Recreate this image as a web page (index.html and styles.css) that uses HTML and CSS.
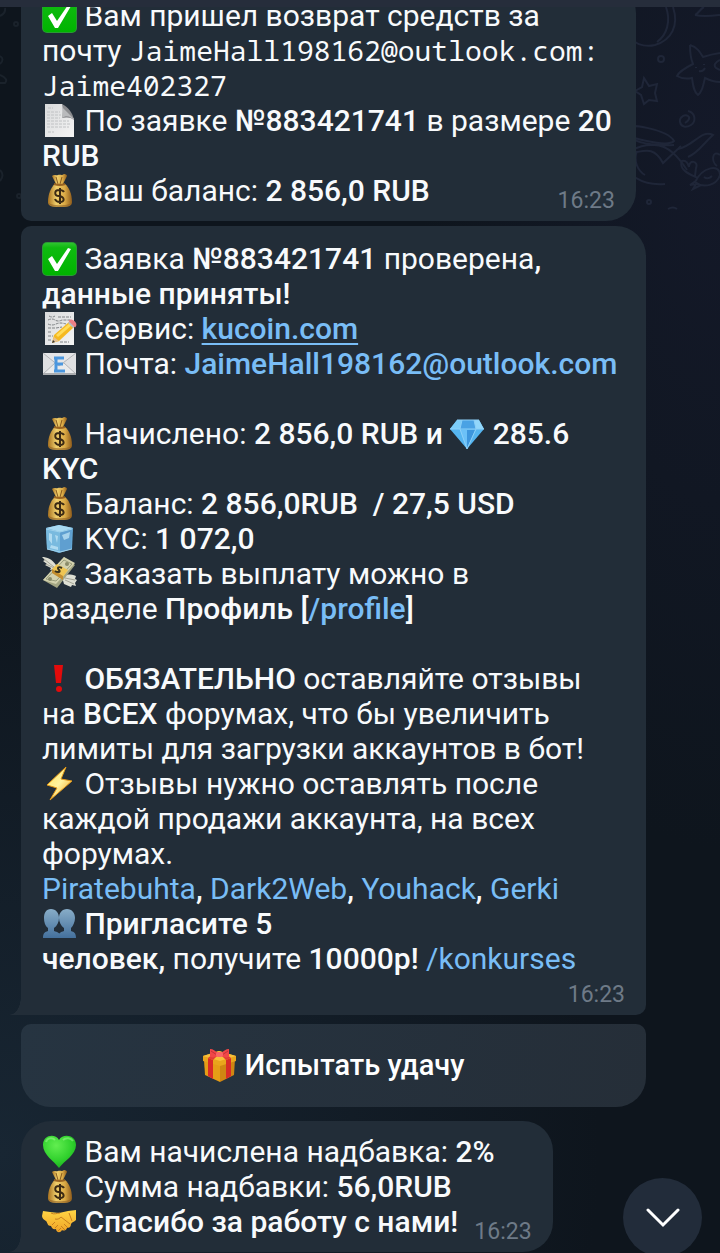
FILE: index.html
```
<!DOCTYPE html>
<html lang="ru">
<head>
    <meta charset="utf-8">
    <meta name="viewport" content="width=device-width, initial-scale=1">
    <title>Чат</title>
    <link rel="stylesheet" href="styles.css">
</head>
<body>

    <!-- emoji set -->
    <svg class="sprites" aria-hidden="true">
        <defs>
            <linearGradient id="gGreen" x1="0" y1="0" x2="0" y2="1">
                <stop offset="0" stop-color="#2fc42f"/><stop offset=".15" stop-color="#0fba10"/><stop offset="1" stop-color="#00b400"/>
            </linearGradient>
            <linearGradient id="gGold" x1="0" y1="0" x2="1" y2="0">
                <stop offset="0" stop-color="#a87220"/><stop offset=".35" stop-color="#f0cf6c"/><stop offset=".7" stop-color="#dbaa45"/><stop offset="1" stop-color="#8f5c1c"/>
            </linearGradient>
            <linearGradient id="gPaper" x1="0" y1="0" x2="1" y2="1">
                <stop offset="0" stop-color="#d9dadb"/><stop offset="1" stop-color="#f4f4f4"/>
            </linearGradient>
            <linearGradient id="gPeople" x1="0" y1="0" x2="0" y2="1">
                <stop offset="0" stop-color="#88adc8"/><stop offset="1" stop-color="#44709c"/>
            </linearGradient>
            <linearGradient id="gBolt" x1="0" y1="0" x2="1" y2="1">
                <stop offset="0" stop-color="#ffe45c"/><stop offset=".5" stop-color="#fff3a0"/><stop offset="1" stop-color="#f09a10"/>
            </linearGradient>
            <linearGradient id="gHand" x1="0" y1="0" x2="0" y2="1">
                <stop offset="0" stop-color="#ffd545"/><stop offset="1" stop-color="#f0a325"/>
            </linearGradient>
            <radialGradient id="gHeart" cx=".4" cy=".3" r=".8">
                <stop offset="0" stop-color="#62ee50"/><stop offset=".6" stop-color="#2fd02c"/><stop offset="1" stop-color="#15a51d"/>
            </radialGradient>
        </defs>

        <symbol id="check" viewBox="0 0 35 35">
            <rect x="0" y="1" width="35" height="34" rx="5" fill="#2b9a35"/>
            <rect x="1" y="2" width="33" height="32" rx="4" fill="url(#gGreen)"/>
            <path d="M6 18l4-3 5 8L26 7l3 1-13 22h-3z" fill="#fff"/>
        </symbol>

        <symbol id="page" viewBox="0 0 35 35">
            <path d="M3 1h17l12 15v18H3z" fill="url(#gPaper)"/>
            <path d="M20 1c1 5 1 10 0 14 4-1 9-1 12 2C31 10 26 4 20 1z" fill="#8b8c8f"/>
            <path d="M20 15c4-3 8-2 12 2V16L21 5z" fill="#b9babc"/>
            <path d="M6 5h5M5 9h13M5 12h14M5 15h13M5 18h22M5 21h24M5 24h22M6 29h6" stroke="#c0c2c4" stroke-width="1" stroke-dasharray="3 1"/>
        </symbol>

        <symbol id="bag" viewBox="0 0 35 35">
            <path d="M10 3c2-2 4 0 6-1s4 1 6-1c2 0 3 1 3 2l-4 8h-7z" fill="url(#gGold)"/>
            <path d="M14 4l2 7M20 4l-2 7" stroke="#8a5c1f" stroke-width="1"/>
            <path d="M13 11h10c4 3 7 10 7 18 0 4-3 5-12 5S6 33 6 29c0-8 3-15 7-18z" fill="url(#gGold)"/>
            <path d="M7 30c3 3 19 3 22 0 0 3-3 4-11 4S7 33 7 30z" fill="#8f6124" opacity=".6"/>
            <path d="M12 11q6 2 11 0" stroke="#9a6422" stroke-width="2" fill="none"/>
            <path d="M22 19c-1-2-3-2-5-2-5 0-5 6 0 6 6 1 6 6 1 6-2 0-4 0-5-3M18 15v16" stroke="#3b2a14" stroke-width="2" fill="none"/>
        </symbol>

        <symbol id="memo" viewBox="0 0 35 35">
            <path d="M3 1h29v33H3z" fill="url(#gPaper)"/>
            <path d="M7 5q3 2 6 0M16 6h13M6 9q4-2 7 0t7 0h9M6 13q4 2 8 0t10 0M6 17h8l6-1M6 21h4M6 25h5M6 29h4M18 31h9" stroke="#808386" stroke-width="1" fill="none" stroke-dasharray="3 1"/>
            <path d="M12 24L27 11l5 5-15 14-7 2z" fill="#f5b921"/>
            <path d="M14 24L28 12l2 2-14 12z" fill="#ffdc5a"/>
            <path d="M12 26l5 4-7 2z" fill="#e6c190"/><path d="M10 32l1-3 2 2z" fill="#333"/>
            <path d="M26 12l2-2 5 5-2 2z" fill="#b6bcc2"/>
            <path d="M28 10c2-2 7 3 5 5z" fill="#ec7f85" stroke="#ec7f85" stroke-width="2"/>
        </symbol>

        <symbol id="email" viewBox="0 0 35 35">
            <path d="M1 7h33v22H1z" fill="#dfe0e2"/>
            <path d="M1 28l12-11h9l12 11" fill="#e9eaeb" stroke="#b3b5b8"/>
            <path d="M1 7l16 13L34 7" fill="#e4e5e7" stroke="#b3b5b8"/>
            <path d="M1 28h33" stroke="#aaacaf" stroke-width="2"/>
            <path d="M22 12h-8v13h9M14 18h7M12 12h3M12 25h3" stroke="#4c97de" stroke-width="3" fill="none"/>
        </symbol>

        <symbol id="gem" viewBox="0 0 35 35">
            <path d="M7 4l22 0 5 9-17 20L0 13z" fill="#55b5f0"/>
            <path d="M7 4h5l-2 9H0z" fill="#7ccdf9"/><path d="M12 4h12l2 9H10z" fill="#4aa2e4"/><path d="M24 4h5l5 9h-8z" fill="#92d7fb"/>
            <path d="M10 14l7 19 8-19z" fill="#6cc1f7"/><path d="M17 14v19l8-19z" fill="#3d96dd"/>
            <path d="M7 4h22M0 13h34M12 4l-2 9 7 20 9-20-2-9" stroke="#8dd0f8" stroke-width="1" fill="none"/>
        </symbol>

        <symbol id="ice" viewBox="0 0 35 35">
            <path d="M4 7l13-3 14 3-1 21-13 4-12-4z" fill="#63a9d8"/>
            <path d="M4 7l13-3 14 3-13 4z" fill="#a9daf2"/>
            <path d="M4 8l14 3v20L5 28z" fill="#79badf"/>
            <path d="M18 11l12-3-1 20-11 3z" fill="#5f9fd0"/>
            <path d="M7 12l3 1v10l-3-4zM20 14l8-3-1 6-5 2zM9 24l7 2v3l-8-2zM13 14l3 1-1 7z" fill="#c7e9f8" opacity=".7"/>
            <path d="M4 8l14 3 12-3M5 28l13 3 12-3" stroke="#a0d2ec" fill="none"/>
        </symbol>

        <symbol id="cash" viewBox="0 0 35 35">
            <path d="M14 9C10 3 5 1 0 1l3 3-2 1 4 3-2 1 6 3-1 2 6-1z" fill="#dfdfd3"/>
            <path d="M20 21c3-3 8-3 14-1l-1 3 2 1-2 3 1 3-4-1-1 2-7-3z" fill="#dedfd3"/>
            <path d="M2 3l10 8M4 8l8 4M23 22l10 2M23 24l9 4" stroke="#a5a596" fill="none"/>
            <path d="M1 24L22 1l11 8-18 23z" fill="#a3a583"/>
            <path d="M1 24L22 1l11 6-19 21z" fill="#d3d2af"/>
            <path d="M4 23L22 4l8 4-16 17z" fill="none" stroke="#9a9d7c"/>
            <path d="M10 13l5-5 11 6-5 7z" fill="#eec553"/><path d="M10 13l11 7v4l-11-7z" fill="#c28d2f"/>
            <path d="M20 12c-4-2-5 0-3 2s-1 3-4 1" fill="none" stroke="#37321f" stroke-width="2"/>
            <circle cx="25" cy="8" r="2" fill="#898b68"/><circle cx="8" cy="23" r="2" fill="#898b68"/>
        </symbol>

        <symbol id="excl" viewBox="0 0 35 35">
            <path d="M12 4h9l-2 18h-5z" fill="#e30b0b"/><circle cx="17" cy="28" r="3" fill="#e30b0b"/>
        </symbol>

        <symbol id="bolt" viewBox="0 0 35 35">
            <path d="M24 1L5 19l10 3-7 12 22-19-11-2z" fill="url(#gBolt)" stroke="#e69a18" stroke-width="1"/>
        </symbol>

        <symbol id="people" viewBox="0 0 35 35">
            <path d="M25 3c5 0 8 4 8 9 0 4-2 8-4 10v3c3 1 5 2 5 7H16c0-5 3-6 6-7v-3c-3-2-5-6-5-10 0-5 3-9 8-9z" fill="url(#gPeople)"/>
            <path d="M9 3c5 0 8 4 8 9 0 4-2 8-5 10v3c3 1 7 2 7 7H1c0-5 2-6 5-7v-3c-3-2-4-6-4-10 0-5 2-9 7-9z" fill="url(#gPeople)"/>
        </symbol>

        <symbol id="gift" viewBox="0 0 35 35">
            <path d="M2 12l16 5v17L3 27z" fill="#e69d16"/><path d="M18 16l15-5-1 16-14 7z" fill="#cf8612"/>
            <path d="M1 8l16-5 17 5v5l-16 5L1 13z" fill="#e9a51c"/>
            <path d="M1 8l16-5 17 5-16 5z" fill="#f8bf3a"/>
            <path d="M6 10l5 2v19l-5-3zM24 12l5-2v18l-5 3z" fill="#d92b27"/>
            <path d="M6 10l5-4 4 2-4 4zM29 10l-5-4-4 2 4 4z" fill="#e23b35"/>
            <path d="M17 6c-3-3-6-5-9-5v8c4 1 6 0 9-2zM18 6c3-3 6-5 9-5v8c-4 1-6 0-9-2z" fill="#f04747"/>
            <path d="M9 3l6 4M26 3l-6 4" stroke="#c4303a"/>
            <rect x="14" y="4" width="7" height="5" rx="2" fill="#fa6565"/>
        </symbol>

        <symbol id="heart" viewBox="0 0 35 35">
            <path d="M17 34C12 27 1 21 1 11 1 1 13-1 17 6c4-7 17-5 17 5 0 10-12 16-17 23z" fill="url(#gHeart)"/>
            <path d="M4 8c1-4 6-5 9-2M21 6c3-3 8-2 10 1" stroke="#a3f796" stroke-width="2" fill="none" opacity=".5"/>
        </symbol>

        <symbol id="shake" viewBox="0 0 35 35">
            <path d="M1 7l7 1 9 1 9-2 8-1v10c-2 2-4 2-5 4 0 3-2 4-4 4-1 3-4 3-5 2-2 4-6 2-6-1-3 1-4-1-5-3-4 0-3-3-5-5-2-1-4-3-4-5z" fill="url(#gHand)"/>
            <path d="M9 9c3 2 6 0 9 0M13 15c3 1 5-1 6-2l9 7M10 21l3-3M13 24l3-3M16 27l3-3M22 20l4 4M19 22l4 4M27 9l3 8" stroke="#c8801f" stroke-width="1" fill="none"/>
        </symbol>
    </svg>

    <header class="topbar"></header>

    <!-- wallpaper doodles -->
    <svg class="doodles doodles-right" viewBox="0 0 100 220" aria-hidden="true">
        <path d="M53 7c6 18-1 33-18 38-8 2-16 0-20-3M46 7c5 14 1 28-9 35"/>
        <path d="M75 15c4-2 5-6 9-8M75 15c8 2 16 1 25 0"/>
        <circle cx="41" cy="59" r="3"/>
        <path d="M70 45c7 2 10 7 13 12 6-2 10-3 17-4M70 45c0 7 0 12 3 19-8 4-14 8-16 12 5 3 10 3 15 2 1 8 2 14 6 17 5-4 5-10 7-17 6 3 10 4 15 4"/>
        <path d="M76 67v1M84 64v1M79 71q4 1 6-3M100 60q-8 4-4 8l4 2"/>
        <path d="M24 78l5 8 8-2-2 9 2 8-8-1-5 4-3-9-6-4 7-4zM65 123c3-2 6-5 3-7s-9 1-8 6 6 6 11 3 5-12-3-14"/>
        <path d="M0 128c9-6 48 2 54 13-6 6-34-1-54-7M0 132c16 12 34 14 54 13M0 165c4-13 19-21 34-20 15 0 25 13 33 25M0 160c9 17 23 26 45 24M17 151c-4 10 1 20 8 24M17 152c10-2 18-4 26 11l18-17"/>
        <path d="M58 149c16-3 23-20 35-14-10 9-15 18-25 22M78 178c-7-3-20-8-16-17 5-1 6 3 7 6 0-8 10-6 7 1l-1 8M75 182c8-16 25-18 25-7-3 10-16 14-25 7zM77 180l-7 5 6-1-3 5 8-4M84 177q4 3 8-1M100 155c-8-6-9 7-3 11"/>
        <circle cx="29" cy="202" r="2"/><path d="M48 209q5-3 9 0"/>
    </svg>
    <svg class="doodles doodles-left" viewBox="0 0 21 220" aria-hidden="true">
        <path d="M5 8q1 5-5 8M0 56q5 3 0 8M0 75q9 4 5 8H0M0 170q5 5 0 11"/><circle cx="16" cy="24" r="2"/><circle cx="19" cy="196" r="2"/>
    </svg>

    <main class="chat">
        <article class="bubble bubble-first">
            <svg class="emoji"><use href="#check"/></svg> Вам пришел возврат средств за<br>
            почту <code>JaimeHall198162@outlook.com:<br>Jaime402327</code><br>
            <svg class="emoji"><use href="#page"/></svg> По заявке <b>№883421741</b> в размере <b>20<br>RUB</b><br>
            <svg class="emoji"><use href="#bag"/></svg> Ваш баланс: <b>2 856,0 RUB</b>
            <time>16:23</time>
        </article>

        <article class="bubble bubble-main tail">
            <svg class="emoji"><use href="#check"/></svg> Заявка <b>№883421741</b> проверена<b>,<br>
            данные приняты!</b><br>
            <svg class="emoji"><use href="#memo"/></svg> Сервис: <a class="site" href="#kucoin">kucoin.com</a><br>
            <svg class="emoji"><use href="#email"/></svg> Почта: <b><a href="#mail">JaimeHall198162@outlook.com</a></b><br>
            <br>
            <svg class="emoji"><use href="#bag"/></svg> Начислено: <b>2 856,0 RUB и <svg class="emoji"><use href="#gem"/></svg> 285.6<br>KYC</b><br>
            <svg class="emoji"><use href="#bag"/></svg> Баланс: <b>2 856,0RUB&nbsp; / 27,5 USD</b><br>
            <svg class="emoji"><use href="#ice"/></svg> KYC: <b>1 072,0</b><br>
            <svg class="emoji"><use href="#cash"/></svg> Заказать выплату можно в<br>
            разделе <b>Профиль [<a href="#profile">/profile</a>]</b><br>
            <br>
            <svg class="emoji"><use href="#excl"/></svg> <b>ОБЯЗАТЕЛЬНО</b> оставляйте отзывы<br>
            на <b>ВСЕХ</b> форумах, что бы увеличить<br>
            лимиты для загрузки аккаунтов в бот!<br>
            <svg class="emoji"><use href="#bolt"/></svg> Отзывы нужно оставлять после<br>
            каждой продажи аккаунта, на всех<br>
            форумах.<br>
            <a href="#piratebuhta">Piratebuhta</a><b>,</b> <a href="#dark2web">Dark2Web</a><b>,</b> <a href="#youhack">Youhack</a><b>,</b> <a href="#gerki">Gerki</a><br>
            <svg class="emoji"><use href="#people"/></svg> <b>Пригласите 5<br>
            человек,</b> получите <b>10000р!</b> <a href="#konkurses">/konkurses</a>
            <time>16:23</time>
        </article>

        <button class="luck" type="button"><svg class="emoji"><use href="#gift"/></svg> Испытать удачу</button>

        <article class="bubble bubble-last tail">
            <svg class="emoji"><use href="#heart"/></svg> Вам начислена надбавка: <b>2%</b><br>
            <svg class="emoji"><use href="#bag"/></svg> Сумма надбавки: <b>56,0RUB</b><br>
            <svg class="emoji"><use href="#shake"/></svg> <b>Спасибо за работу с нами!</b>
            <time>16:23</time>
        </article>
    </main>

    <button class="scroll-down" type="button" aria-label="Вниз">
        <svg viewBox="0 0 34 20"><path d="M2 2l15 15L32 2"/></svg>
    </button>

</body>
</html>
```
FILE: styles.css
```
* {
    box-sizing: border-box;
}
body {
    margin: 0;
    min-height: 100vh;
    overflow: hidden;
    position: relative;
    background:
        radial-gradient(ellipse 600px 600px at 0% 92%, #182633, transparent),
        radial-gradient(ellipse 300px 700px at 100% 12%, #141929, transparent),
        #0e151d;
    color: #f8fafc;
    font-family: Roboto, "Noto Sans", sans-serif;
    font-size: 30px;
    line-height: 35px;
}
b {
    font-weight: 500;
}
a {
    color: #79bdf6;
    text-decoration: none;
}
code {
    font-family: "Noto Sans Mono", "DejaVu Sans Mono", monospace;
    font-size: 28px;
    line-height: 1;
}
time {
    position: absolute;
    right: 21px;
    bottom: 7px;
    color: #6e7a87;
    font-size: 23px;
    line-height: 26px;
}
.sprites {
    position: absolute;
    width: 0;
    height: 0;
}
.topbar {
    position: fixed;
    top: 0;
    left: 0;
    right: 0;
    height: 7px;
    background: #262d3b;
    z-index: 2;
}
.doodles {
    position: absolute;
    top: 0;
    height: 220px;
    fill: none;
    stroke: #1f2638;
    stroke-width: 2;
}
.doodles-right {
    right: 0;
    width: 100px;
}
.doodles-left {
    left: 0;
    width: 21px;
    stroke: #1a222b;
}

/* the list is scrolled a little under the top bar */
.chat {
    position: relative;
    display: flex;
    flex-direction: column;
    align-items: flex-start;
    max-width: 646px;
    margin-top: -17px;
    padding-left: 21px;
}
.bubble {
    position: relative;
    padding: 15px 21px 13px;
    background: #222d38;
    white-space: nowrap;
}
.bubble-first {
    padding-right: 24px;
    margin-bottom: 5px;
    border-radius: 10px 30px 30px 10px;
}
.bubble-main {
    align-self: stretch;
    padding-bottom: 39px;
    border-radius: 10px 30px 10px 0;
}
.bubble-last {
    padding-top: 13px;
    padding-right: 58px;
    border-radius: 30px 30px 30px 0;
}
.tail::before {
    content: "";
    position: absolute;
    left: -11px;
    bottom: 0;
    width: 11px;
    height: 18px;
    background: radial-gradient(ellipse 11px 18px at 0 0, transparent 96%, #222d38 100%);
}
.emoji {
    width: 35px;
    height: 35px;
    vertical-align: top;
}
.site {
    font-weight: 500;
    text-decoration: underline;
    text-decoration-thickness: 2px;
    text-underline-offset: 4px;
}
.luck {
    align-self: stretch;
    margin: 9px 0 14px;
    padding: 24px;
    border: none;
    border-radius: 10px 10px 30px 30px;
    background: linear-gradient(100deg, #263441, #252e38);
    color: #fff;
    font: 500 29px/35px Roboto, "Noto Sans", sans-serif;
    cursor: pointer;
}
.scroll-down {
    position: fixed;
    right: 18px;
    bottom: -4px;
    display: grid;
    place-items: center;
    width: 79px;
    height: 79px;
    padding: 0;
    border: none;
    border-radius: 50%;
    background: #222c3a;
    cursor: pointer;
}
.scroll-down svg {
    width: 34px;
    height: 20px;
    fill: none;
    stroke: #fff;
    stroke-width: 3;
    stroke-linecap: round;
}
```
